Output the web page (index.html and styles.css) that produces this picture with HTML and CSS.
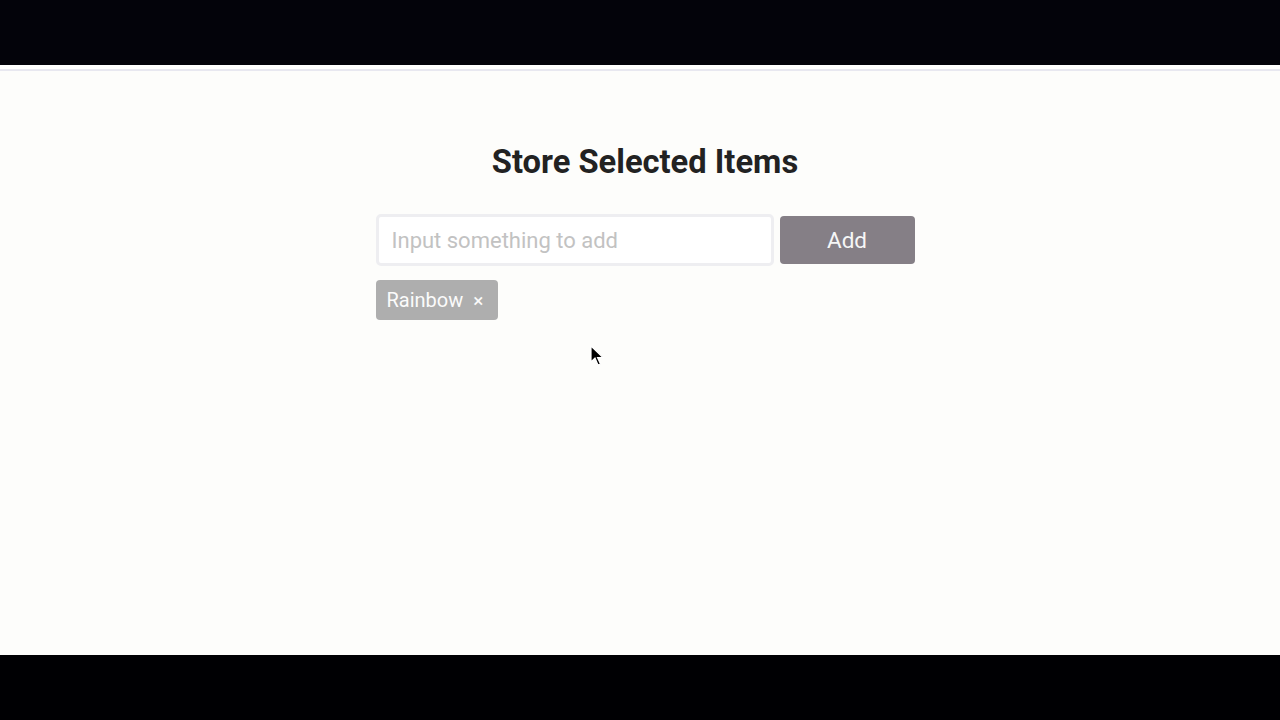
FILE: index.html
```html
<!DOCTYPE html>
<html>
<head>
<meta charset="utf-8">
<link rel="stylesheet" href="styles.css">
</head>
<body>
<div class="topbar"></div>
<div class="page">
  <main class="main">
    <div class="card">
      <h1 class="title">Store Selected Items</h1>
      <div class="form">
        <input class="field" type="text" placeholder="Input something to add">
        <button class="add">Add</button>
      </div>
      <div class="tags">
        <span class="tag">Rainbow <span class="x">×</span></span>
      </div>
    </div>
  </main>
  <svg class="cursor" width="14" height="22" viewBox="0 0 14 22"><path d="M1 1 L1 17 L5 13 L8 20 L10.5 19 L7.5 12.5 L13 12.5 Z" fill="#000" stroke="#fff" stroke-width="1.2"/></svg>
</div>
<div class="bottombar"></div>
</body>
</html>
```
FILE: styles.css
```css
* { box-sizing: border-box; }
html, body { margin: 0; padding: 0; }
body {
  width: 1280px;
  height: 720px;
  overflow: hidden;
  background: #000003;
  font-family: Roboto, "Noto Sans", sans-serif;
  display: flex;
  flex-direction: column;
}
.topbar { height: 65px; background: #03030a; }
.bottombar { height: 65px; background: #000003; }
.page {
  position: relative;
  flex: 1;
  background: #fdfdfb;
  border-top: 4px solid #ffffff;
}
.main {
  border-top: 2px solid #e8e8f0;
  display: flex;
  justify-content: center;
  padding-left: 10px;
}
.card { width: 539px; }
.title {
  margin: 71px 0 0;
  text-align: center;
  font-size: 32.7px;
  font-weight: 700;
  color: #222222;
  line-height: 40px;
}
.form {
  display: flex;
  align-items: center;
  gap: 6px;
  margin-top: 32px;
}
.field {
  width: 398px;
  height: 52px;
  border: 3px solid #eeeef1;
  border-radius: 5px;
  padding: 0 13px;
  font-family: inherit;
  font-size: 22px;
  background: #fff;
  outline: none;
}
.field::placeholder { color: #c2c2c2; }
.add {
  width: 135px;
  height: 48px;
  border: none;
  border-radius: 4px;
  background: #857f86;
  color: #f6f6f6;
  font-family: inherit;
  font-size: 22.5px;
}
.tags { margin-top: 14px; display: flex; }
.tag {
  display: inline-flex;
  align-items: center;
  height: 40px;
  width: 122px;
  padding: 0 0 0 11px;
  background: #aeaeae;
  border-radius: 4px;
  color: #fbfbfb;
  font-size: 20px;
}
.x { margin-left: 10px; font-size: 19px; }
.cursor { position: absolute; left: 590px; top: 276px; }
```
